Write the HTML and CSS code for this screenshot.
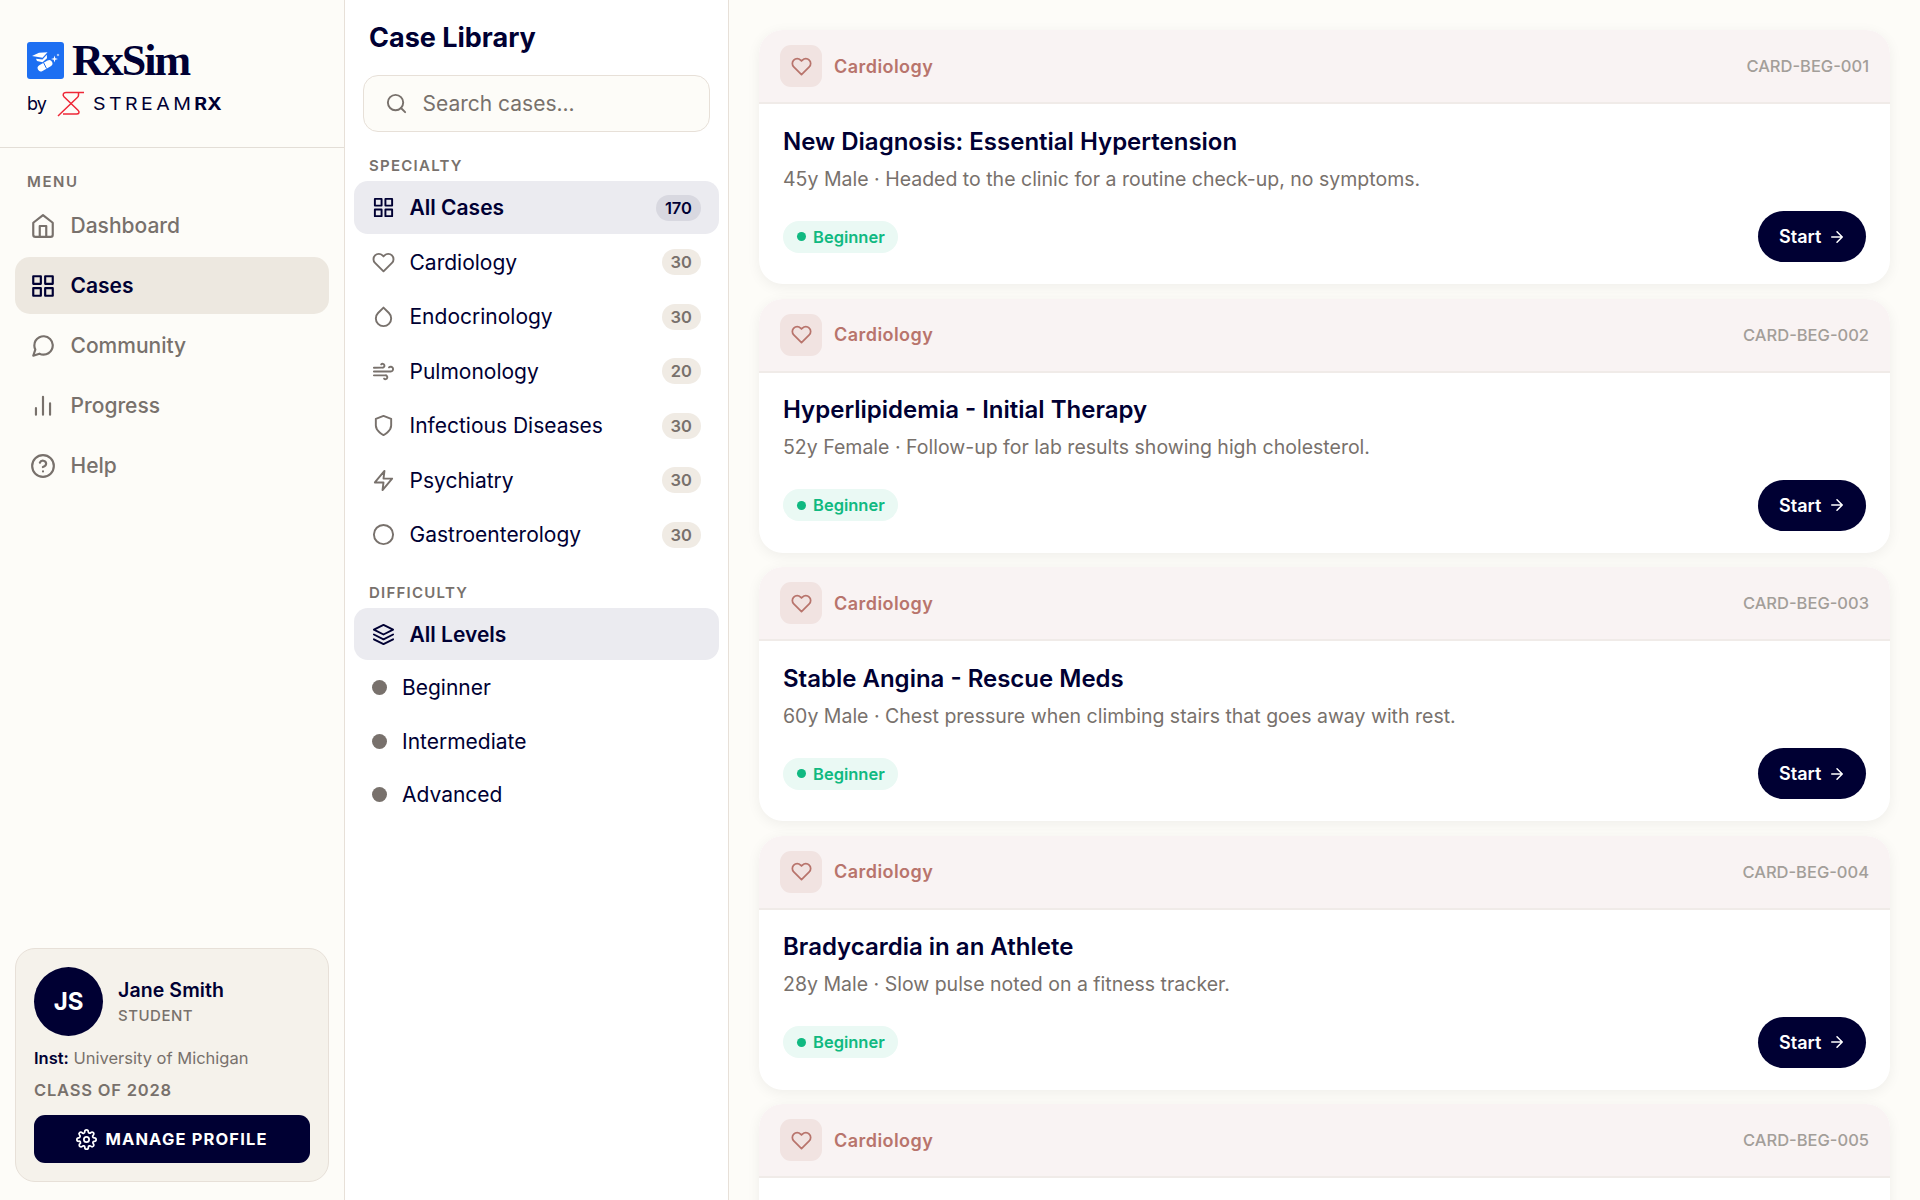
FILE: index.html
```html
<!DOCTYPE html>
<html lang="en">
<head>
    <meta charset="UTF-8">
    <meta name="viewport" content="width=device-width, initial-scale=1.0">
    <title>RxSim - Case Library</title>
    <link rel="stylesheet" href="styles.css">
</head>
<body>
    <!-- shared icons -->
    <svg class="sprite">
        <symbol id="i-home" viewBox="0 0 24 24"><path d="M3 9l9-7 9 7v11a2 2 0 0 1-2 2H5a2 2 0 0 1-2-2z"/><path d="M9 22V12h6v10"/></symbol>
        <symbol id="i-grid" viewBox="0 0 24 24"><path d="M3 3h7v7H3zM14 3h7v7h-7zM14 14h7v7h-7zM3 14h7v7H3z"/></symbol>
        <symbol id="i-chat" viewBox="0 0 24 24"><path d="M21 11.5a8.38 8.38 0 0 1-.9 3.8 8.5 8.5 0 0 1-7.6 4.7 8.38 8.38 0 0 1-3.8-.9L3 21l1.9-5.7a8.38 8.38 0 0 1-.9-3.8 8.5 8.5 0 0 1 4.7-7.6 8.38 8.38 0 0 1 3.8-.9h.5a8.48 8.48 0 0 1 8 8z"/></symbol>
        <symbol id="i-bars" viewBox="0 0 24 24"><path d="M18.500 20V9.500M12 20V3.500M5.500 20v-6"/></symbol>
        <symbol id="i-help" viewBox="0 0 24 24"><circle cx="12" cy="12" r="10"/><path d="M9.1 9a3 3 0 0 1 5.8 1c0 2-3 3-3 3M12 17h.01"/></symbol>
        <symbol id="i-gear" viewBox="0 0 24 24"><circle cx="12" cy="12" r="3"/><path d="M19.4 15a1.65 1.65 0 0 0 .33 1.82l.06.06a2 2 0 1 1-2.83 2.83l-.06-.06a1.65 1.65 0 0 0-2.8 1.17V21a2 2 0 0 1-4 0v-.09a1.65 1.65 0 0 0-2.9-1.08l-.06.06a2 2 0 1 1-2.83-2.83l.06-.06A1.65 1.65 0 0 0 3.1 14H3a2 2 0 0 1 0-4h.09a1.65 1.65 0 0 0 1.08-2.9l-.06-.06a2 2 0 1 1 2.83-2.83l.06.06A1.65 1.65 0 0 0 10 3.1V3a2 2 0 0 1 4 0v.09a1.65 1.65 0 0 0 2.9 1.08l.06-.06a2 2 0 1 1 2.83 2.83l-.06.06A1.65 1.65 0 0 0 20.9 10H21a2 2 0 0 1 0 4h-.09a1.65 1.65 0 0 0-1.51 1z"/></symbol>
        <symbol id="i-search" viewBox="0 0 24 24"><circle cx="11" cy="11" r="8"/><path d="M21 21l-4.35-4.35"/></symbol>
        <symbol id="i-heart" viewBox="0 0 24 24"><path d="M20.84 4.61a5.5 5.5 0 0 0-7.78 0L12 5.67l-1.06-1.06a5.5 5.5 0 0 0-7.78 7.78L12 21.23l8.84-8.84a5.5 5.5 0 0 0 0-7.78z"/></symbol>
        <symbol id="i-drop" viewBox="0 0 24 24"><path d="M12 2.69l5.66 5.66a8 8 0 1 1-11.31 0z"/></symbol>
        <symbol id="i-wind" viewBox="0 0 24 24"><path d="M9.59 4.59A2 2 0 1 1 11 8H2m10.59 11.41A2 2 0 1 0 14 16H2m15.73-8.27A2.5 2.5 0 1 1 19.5 12H2"/></symbol>
        <symbol id="i-shield" viewBox="0 0 24 24"><path d="M12 22s8-4 8-10V5l-8-3-8 3v7c0 6 8 10 8 10z"/></symbol>
        <symbol id="i-bolt" viewBox="0 0 24 24"><path d="M13 2L3 14h9l-1 8 10-12h-9z"/></symbol>
        <symbol id="i-circle" viewBox="0 0 24 24"><circle cx="12" cy="12" r="10"/></symbol>
        <symbol id="i-layers" viewBox="0 0 24 24"><path d="M12 2L2 7l10 5 10-5zM2 17l10 5 10-5M2 12l10 5 10-5"/></symbol>
        <symbol id="i-arrow" viewBox="0 0 24 24"><path d="M5 12h14M12 5l7 7-7 7"/></symbol>
    </svg>

    <div class="app">
        <aside class="sidebar">
            <div class="brand">
                <div class="brand-main">
                    <svg class="brand-icon" viewBox="0 0 37 37">
                        <rect width="37" height="37" rx="3" fill="#1d6ff2"/>
                        <path d="M5 14l7-3.200 8.500-.6-5 5.600zM9 16.800l6.500.6 4.300-4.600.2 3.500-4.500 4-5.500-1.200z" fill="#fff"/>
                        <rect x="10" y="20.500" width="16" height="6.500" rx="3.250" transform="rotate(-30 18 23.700)" fill="#fff"/>
                        <path d="M16.500 20.500l3 6" stroke="#1d6ff2"/>
                        <path d="M27.500 13.500l.8 2.700 2.700.8-2.700.8-.8 2.700-.8-2.700-2.700-.8 2.700-.8zM31 11.500l.4 1.100 1.100.4-1.100.4-.4 1.100-.4-1.100-1.100-.4 1.100-.4z" fill="#fff"/>
                    </svg>
                    <span class="brand-name">RxSim</span>
                </div>
                <div class="brand-sub">
                    <span class="by">by</span>
                    <svg class="stream-icon" viewBox="0 0 28 26"><path d="M27 1.500H9c-3 0-3.500 2.500-2 4.200l14 13.500c2 2 1 3.800-1.500 3.800H6M21.500 1.500v2.700c0 1-.5 1.700-1.200 2.300L1 25"/></svg>
                    <span class="stream">STREAM<b>RX</b></span>
                </div>
            </div>

            <nav class="menu">
                <h3 class="label">MENU</h3>
                <a class="menu-item"><svg class="icon"><use href="#i-home"/></svg>Dashboard</a>
                <a class="menu-item active"><svg class="icon"><use href="#i-grid"/></svg>Cases</a>
                <a class="menu-item"><svg class="icon"><use href="#i-chat"/></svg>Community</a>
                <a class="menu-item"><svg class="icon"><use href="#i-bars"/></svg>Progress</a>
                <a class="menu-item"><svg class="icon"><use href="#i-help"/></svg>Help</a>
            </nav>

            <div class="profile">
                <div class="profile-top">
                    <div class="avatar">JS</div>
                    <div class="profile-text">
                        <div class="profile-name">Jane Smith</div>
                        <div class="profile-role">STUDENT</div>
                    </div>
                </div>
                <div class="profile-inst"><b>Inst:</b> University of Michigan</div>
                <div class="profile-class">CLASS OF 2028</div>
                <button class="manage"><svg class="icon"><use href="#i-gear"/></svg>MANAGE PROFILE</button>
            </div>
        </aside>

        <section class="library">
            <h2>Case Library</h2>
            <div class="search"><svg class="icon"><use href="#i-search"/></svg>Search cases...</div>

            <h3 class="label">SPECIALTY</h3>
            <div class="filters">
                <a class="filter active"><svg class="icon"><use href="#i-grid"/></svg>All Cases<span class="count">170</span></a>
                <a class="filter"><svg class="icon"><use href="#i-heart"/></svg>Cardiology<span class="count">30</span></a>
                <a class="filter"><svg class="icon"><use href="#i-drop"/></svg>Endocrinology<span class="count">30</span></a>
                <a class="filter"><svg class="icon"><use href="#i-wind"/></svg>Pulmonology<span class="count">20</span></a>
                <a class="filter"><svg class="icon"><use href="#i-shield"/></svg>Infectious Diseases<span class="count">30</span></a>
                <a class="filter"><svg class="icon"><use href="#i-bolt"/></svg>Psychiatry<span class="count">30</span></a>
                <a class="filter"><svg class="icon"><use href="#i-circle"/></svg>Gastroenterology<span class="count">30</span></a>
            </div>

            <h3 class="label">DIFFICULTY</h3>
            <div class="filters levels">
                <a class="filter active"><svg class="icon"><use href="#i-layers"/></svg>All Levels</a>
                <a class="filter"><span class="dot"></span>Beginner</a>
                <a class="filter"><span class="dot"></span>Intermediate</a>
                <a class="filter"><span class="dot"></span>Advanced</a>
            </div>
        </section>

        <main class="cases" id="cases"></main>
    </div>

    <script>
        const cases = [
            ['CARD-BEG-001', 'New Diagnosis: Essential Hypertension', '45y Male · Headed to the clinic for a routine check-up, no symptoms.'],
            ['CARD-BEG-002', 'Hyperlipidemia - Initial Therapy', '52y Female · Follow-up for lab results showing high cholesterol.'],
            ['CARD-BEG-003', 'Stable Angina - Rescue Meds', '60y Male · Chest pressure when climbing stairs that goes away with rest.'],
            ['CARD-BEG-004', 'Bradycardia in an Athlete', '28y Male · Slow pulse noted on a fitness tracker.'],
            ['CARD-BEG-005']
        ];

        const cardBody = (title, text) => `
                <div class="card-body">
                    <h4>${title}</h4>
                    <p>${text}</p>
                    <div class="card-foot">
                        <span class="level">Beginner</span>
                        <button class="start">Start<svg class="icon"><use href="#i-arrow"/></svg></button>
                    </div>
                </div>`;

        document.getElementById('cases').innerHTML = cases.map(([id, title, text]) => `
            <article class="card">
                <div class="card-head">
                    <span class="card-icon"><svg class="icon"><use href="#i-heart"/></svg></span>
                    <span class="card-specialty">Cardiology</span>
                    <span class="card-id">${id}</span>
                </div>
                ${title ? cardBody(title, text) : ''}
            </article>`).join('');
    </script>
</body>
</html>
```
FILE: styles.css
```css
* {
    box-sizing: border-box;
}

body {
    margin: 0;
    font-family: Inter, "Liberation Sans", sans-serif;
    color: #000033;
    background: #fdfcf8;
}

h2, h3, h4, p {
    margin: 0;
}

button {
    font-family: inherit;
    border: none;
    color: #fff;
    background: #000033;
}

.sprite {
    display: none;
}

.icon {
    flex: none;
    fill: none;
    stroke: currentColor;
    stroke-width: 2;
    stroke-linecap: round;
    stroke-linejoin: round;
    overflow: visible;
}

.app {
    display: flex;
    height: 1200px;
    overflow: hidden;
}

.label {
    font-size: 15px;
    line-height: 18px;
    font-weight: 600;
    letter-spacing: 1.25px;
    color: #78716c;
}

/* sidebar */
.sidebar {
    width: 345px;
    flex: none;
    display: flex;
    flex-direction: column;
    border-right: 1px solid #e7e0d8;
}

.brand {
    height: 148px;
    padding: 42px 27px 0;
    border-bottom: 1px solid #e3ded7;
}

.brand-main {
    display: flex;
    align-items: center;
    height: 37px;
    gap: 8px;
}

.brand-icon {
    width: 37px;
    height: 37px;
}

.brand-name {
    font-family: "Liberation Serif", serif;
    font-size: 44px;
    line-height: 37px;
    font-weight: 700;
    letter-spacing: -2px;
}

.brand-sub {
    display: flex;
    align-items: center;
    height: 26px;
    margin-top: 12px;
}

.by {
    width: 30px;
    margin-top: -2px;
    font-size: 18px;
    letter-spacing: -0.8px;
}

.stream-icon {
    width: 28px;
    height: 26px;
    fill: none;
    stroke: #ee2737;
    stroke-width: 1.5;
}

.stream {
    margin-left: 8px;
    font-size: 17px;
    letter-spacing: 3px;
    transform: scaleX(1.15);
    transform-origin: left;
}

.stream b {
    letter-spacing: 0;
}

.menu {
    padding: 25px 15px 0;
}

.menu .label {
    margin: 0 12px 6px;
    letter-spacing: 1.6px;
}

.menu-item {
    display: flex;
    align-items: center;
    gap: 14.5px;
    height: 57px;
    margin-bottom: 3px;
    padding-left: 15px;
    border-radius: 15px;
    font-size: 21px;
    font-weight: 500;
    color: #78716c;
}

.menu-item .icon {
    width: 26px;
    height: 26px;
}

.menu-item.active {
    font-weight: 600;
    color: #000033;
    background: #ede8e0;
}

.profile {
    margin: auto 15px 18px;
    height: 234px;
    padding: 18px;
    border: 1px solid #e7e0d8;
    border-radius: 20px;
    background: #f5f2eb;
}

.profile-top {
    display: flex;
    align-items: center;
    gap: 15px;
}

.profile-text {
    padding-top: 2px;
}

.avatar {
    width: 69px;
    height: 69px;
    border-radius: 50%;
    background: #000033;
    color: #fff;
    font-size: 24px;
    font-weight: 700;
    line-height: 69px;
    text-align: center;
}

.profile-name {
    font-size: 19.5px;
    font-weight: 600;
    line-height: 26px;
    letter-spacing: 0.1px;
}

.profile-role {
    font-size: 15px;
    font-weight: 500;
    line-height: 25px;
    letter-spacing: 0.5px;
    color: #78716c;
}

.profile-inst {
    margin-top: 9px;
    font-size: 16.5px;
    line-height: 26px;
    color: #78716c;
}

.profile-inst b {
    font-weight: 600;
    color: #000033;
}

.profile-class {
    margin-top: 6px;
    font-size: 16.5px;
    font-weight: 600;
    line-height: 26px;
    letter-spacing: 0.8px;
    color: #78716c;
}

.manage {
    display: flex;
    align-items: center;
    justify-content: center;
    gap: 8px;
    width: 276px;
    height: 48px;
    margin-top: 12px;
    border-radius: 11px;
    font-size: 16.5px;
    font-weight: 700;
    letter-spacing: 1.15px;
}

.manage .icon {
    width: 21px;
    height: 21px;
}

/* filter column */
.library {
    width: 384px;
    flex: none;
    padding: 20px 9px 0;
    border-right: 1px solid #e7e0d8;
    background: #fff;
}

.library h2 {
    padding-left: 15px;
    font-size: 27px;
    line-height: 35px;
}

.search {
    display: flex;
    align-items: center;
    gap: 14.5px;
    height: 57px;
    margin: 20px 9px 25px;
    padding-left: 21px;
    border: 1px solid #e7e0d8;
    border-radius: 15px;
    background: #fdfcf8;
    font-size: 21px;
    color: #78716c;
}

.search .icon {
    width: 23px;
    height: 23px;
}

.library .label {
    padding-left: 15px;
    margin-bottom: 6px;
}

.filters {
    display: flex;
    flex-direction: column;
    gap: 1.5px;
    margin-bottom: 23px;
}

.filter {
    display: flex;
    align-items: center;
    gap: 14.5px;
    height: 53px;
    padding: 0 18px;
    border-radius: 14px;
    font-size: 21px;
}

.filter .icon {
    width: 23px;
    height: 23px;
    color: #78716c;
}

.filter.active {
    font-weight: 600;
    background: #ebebf0;
}

.filter.active .icon {
    color: #000033;
}

.levels .filter {
    height: 52px;
}

.count {
    margin-left: auto;
    height: 26px;
    padding: 0 9px;
    border-radius: 13px;
    background: #f0ebe4;
    font-size: 16.5px;
    font-weight: 600;
    line-height: 26px;
    color: #78716c;
}

.active .count {
    background: #d8d8e0;
    color: #000033;
}

.dot {
    width: 15px;
    height: 15px;
    margin-right: 0.5px;
    border-radius: 50%;
    background: #78716c;
}

/* case cards */
.cases {
    flex: 1;
    padding: 30px 30px 0;
}

.card {
    height: 254px;
    margin-bottom: 14.5px;
    border-radius: 24px;
    background: #fff;
    box-shadow: 0 3px 14px rgba(0, 0, 0, 0.06);
    overflow: hidden;
}

.card-head {
    display: flex;
    align-items: center;
    height: 74px;
    padding: 0 21px;
    border-bottom: 2px solid #f0ebe8;
    background: #f9f3f3;
}

.card-icon {
    display: flex;
    align-items: center;
    justify-content: center;
    width: 42px;
    height: 42px;
    margin-right: 12px;
    border-radius: 11px;
    background: #f1e3e1;
    color: #b8746c;
}

.card-icon .icon {
    width: 21px;
    height: 21px;
}

.card-specialty {
    font-size: 18px;
    font-weight: 600;
    letter-spacing: 0.45px;
    color: #b8746c;
}

.card-id {
    margin-left: auto;
    font-size: 16.5px;
    font-weight: 500;
    color: #a39e99;
}

.card-body {
    padding: 20.6px 24px 0;
}

.card-body h4 {
    height: 33px;
    font-size: 24px;
    line-height: 33px;
    font-weight: 600;
}

.card-body p {
    height: 30px;
    margin-top: 6.4px;
    font-size: 19.5px;
    line-height: 30px;
    color: #78716c;
}

.card-foot {
    display: flex;
    align-items: center;
    justify-content: space-between;
    margin-top: 17.4px;
}

.level {
    display: flex;
    align-items: center;
    gap: 7px;
    height: 32px;
    padding: 0 13px 0 14px;
    border-radius: 16px;
    background: #eaf9f4;
    font-size: 16.5px;
    font-weight: 600;
    color: #10b981;
}

.level::before {
    content: "";
    width: 9px;
    height: 9px;
    border-radius: 50%;
    background: #10b981;
}

.start {
    display: flex;
    align-items: center;
    gap: 7px;
    width: 108px;
    height: 51px;
    padding: 0 0 0 21px;
    border-radius: 26px;
    font-size: 18px;
    font-weight: 600;
}

.start .icon {
    width: 18px;
    height: 18px;
}
```
